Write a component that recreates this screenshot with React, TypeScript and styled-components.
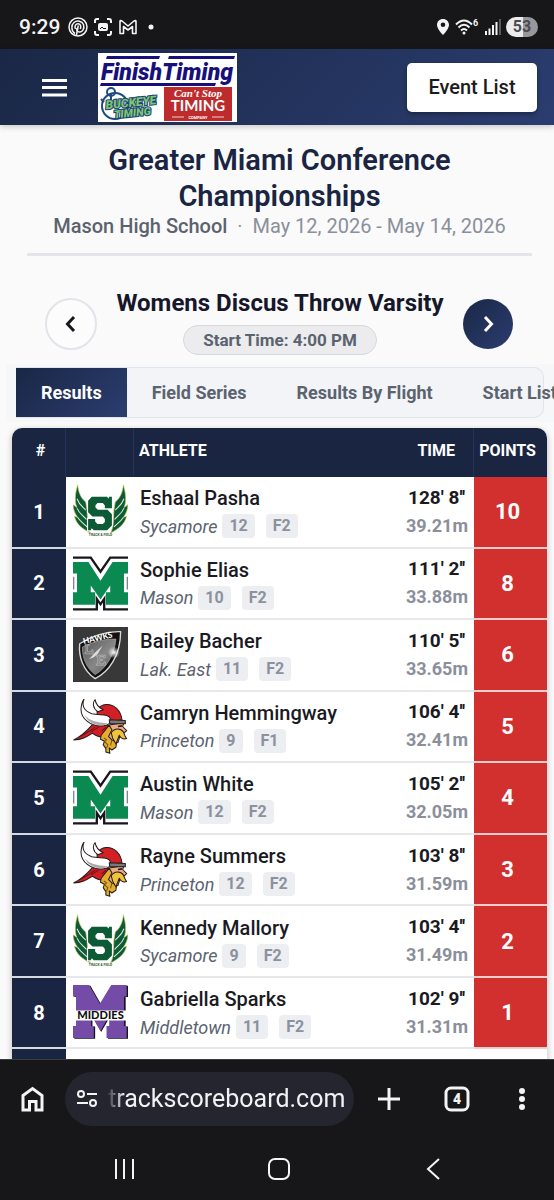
import React from 'react';
import styled, { createGlobalStyle } from 'styled-components';

const GlobalStyle = createGlobalStyle`
  * { box-sizing: border-box; }
  body {
    margin: 0;
    background: #fafafb;
    font-family: Roboto, "Liberation Sans", sans-serif;
    color: #1a1a1f;
  }
  button, input { font-family: inherit; }
`;

const navy = '#1a2542';
const navyGradient = 'linear-gradient(135deg, #1a2745 0%, #2b3d70 100%)';

const Screen = styled.div`
  height: 100vh;
  display: flex;
  flex-direction: column;
  overflow: hidden;
`;

const StatusBar = styled.div`
  flex: none;
  height: 49px;
  padding: 4px 16px 0 19px;
  background: #171719;
  color: #f4f4f5;
  display: flex;
  align-items: center;
  justify-content: space-between;
`;

const StatusGroup = styled.div`
  display: flex;
  align-items: center;
  gap: 5px;
`;

const Clock = styled.span`
  font-size: 21px;
  line-height: 24px;
  font-weight: 500;
  margin-right: 3px;
`;

const Battery = styled.span`
  width: 32px;
  height: 20px;
  border-radius: 10px;
  background: linear-gradient(90deg, #ececee 53%, #98989c 53%);
  color: #4c4c50;
  font-size: 16px;
  line-height: 20px;
  font-weight: 700;
  text-align: center;
`;

const AppHeader = styled.header`
  flex: none;
  height: 76px;
  padding: 0 17px 0 38px;
  display: flex;
  align-items: center;
  background: ${navyGradient};
  box-shadow: 0 2px 6px rgba(0, 0, 0, 0.2);
  position: relative;
`;

const MenuButton = styled.button`
  border: 0;
  padding: 0;
  width: 32px;
  height: 32px;
  background: none;
  color: #fff;
`;

const BrandLink = styled.a`
  display: block;
  height: 69px;
  margin-left: 28px;
`;

const EventListButton = styled.button`
  margin-left: auto;
  width: 130px;
  height: 49px;
  border: 0;
  border-radius: 5px;
  background: #fff;
  color: #1b1b20;
  font-size: 20px;
  font-weight: 500;
  box-shadow: 0 2px 4px rgba(0, 0, 0, 0.35);
`;

const Main = styled.main`
  flex: 1;
  min-height: 0;
  overflow: hidden;
`;

const MeetHeader = styled.section`
  margin: 0 22px 0 27px;
  padding: 17px 56px 15px;
  border-bottom: 3px solid #e3e5ea;
  text-align: center;
`;

const MeetTitle = styled.h1`
  margin: 0;
  font-size: 29px;
  line-height: 36px;
  font-weight: 600;
  color: ${navy};
`;

const MeetInfo = styled.p`
  margin: 0 -56px;
  font-size: 20px;
  line-height: 24px;
  color: #8b8f9a;
  white-space: pre;
`;

const Venue = styled.span`
  font-weight: 500;
  color: #5b626d;
`;

const EventNav = styled.section`
  padding: 30px 41px 0 45px;
  display: flex;
  align-items: center;
  justify-content: space-between;
`;

const RoundButton = styled.button<{ $filled?: boolean }>`
  flex: none;
  width: ${(p) => (p.$filled ? 50 : 52)}px;
  height: ${(p) => (p.$filled ? 50 : 52)}px;
  margin-top: 6px;
  padding: 0;
  border-radius: 50%;
  border: ${(p) => (p.$filled ? '0' : '2px solid #e3e4ea')};
  background: ${(p) => (p.$filled ? navyGradient : '#fcfcfd')};
  color: ${(p) => (p.$filled ? '#fff' : '#17171c')};
  display: flex;
  align-items: center;
  justify-content: center;
`;

const EventInfo = styled.div`
  display: flex;
  flex-direction: column;
  align-items: center;
  gap: 5px;
`;

const EventTitle = styled.h2`
  margin: 0;
  font-size: 24px;
  line-height: 34px;
  font-weight: 700;
  color: #17172a;
  white-space: nowrap;
`;

const StartTime = styled.span`
  padding: 0 19px;
  border: 1px solid #d6d8dc;
  border-radius: 15px;
  background: #ececee;
  color: #5a636f;
  font-size: 17px;
  line-height: 28px;
  font-weight: 700;
`;

const TabStrip = styled.div`
  margin: 9px 0 0 6px;
  padding: 3px 10px 4px;
  background: #f5f7f9;
  overflow: hidden;
`;

const TabList = styled.div`
  height: 51px;
  border: 1px solid #e1e4e8;
  border-left: 0;
  border-radius: 0 10px 10px 0;
  background: #f3f4f7;
  display: flex;
`;

const Tab = styled.button<{ $active?: boolean }>`
  flex: none;
  padding: 0 25px;
  border: 0;
  background: ${(p) => (p.$active ? navyGradient : 'none')};
  color: ${(p) => (p.$active ? '#fff' : '#5a636f')};
  font-size: 18px;
  font-weight: 700;
  white-space: nowrap;
`;

const TableCard = styled.div`
  margin: 6px 7px 0 12px;
  border-radius: 10px;
  overflow: hidden;
  background: #fff;
  box-shadow: 0 2px 6px rgba(0, 0, 0, 0.25);
`;

const Table = styled.table`
  width: 100%;
  height: 693px;
  table-layout: fixed;
  border-collapse: separate;
  border-spacing: 0;
`;

const HeadCell = styled.th<{ $align?: string; $width?: number; $divider?: boolean }>`
  width: ${(p) => (p.$width ? `${p.$width}px` : 'auto')};
  height: 49px;
  padding: ${(p) => (p.$align === 'right' ? '0 18px 4px 0' : p.$align === 'left' ? '0 0 4px 5px' : '0 0 4px 4px')};
  background: ${navy};
  border-right: ${(p) => (p.$divider ? '1px solid #25325a' : '0')};
  color: #fff;
  font-size: 16px;
  line-height: 20px;
  font-weight: 700;
  text-align: ${(p) => p.$align || 'center'};
`;

const PointsHead = styled(HeadCell)`
  padding: 0 6px 4px 0;
`;

const Cell = styled.td`
  padding: 0;
  border-bottom: 2px solid #e6e7ea;
  background: #fff;
  vertical-align: middle;
`;

const RankCell = styled(Cell)`
  background: ${navy};
  border-bottom-color: #d5d9e2;
  color: #fff;
  font-size: 20px;
  font-weight: 700;
  text-align: center;
`;

const LogoCell = styled(Cell)`
  padding: 0 6px 0 7px;
  svg { display: block; }
`;

const AthleteCell = styled(Cell)`
  padding: 7px 0 6px 6px;
`;

const TimeCell = styled(Cell)`
  padding: 0 6px 0 0;
  text-align: right;
`;

const PointsCell = styled(Cell)`
  background: #d22f2f;
  border-bottom-color: #f0cdcd;
  color: #fff;
  font-size: 22px;
  font-weight: 700;
  text-align: center;
  padding-right: 6px;
`;

const AthleteName = styled.div`
  min-height: 28px;
  font-size: 20px;
  line-height: 28px;
  font-weight: 500;
  white-space: nowrap;
`;

const TeamLine = styled.div`
  height: 28px;
  display: flex;
  align-items: center;
  white-space: nowrap;
`;

const TeamName = styled.span`
  margin-right: 5px;
  color: #5a636f;
  font-size: 18px;
  font-style: italic;
  font-weight: 400;
`;

const Badge = styled.span`
  margin-right: 11px;
  padding: 0 7px;
  border-radius: 4px;
  background: #eceef1;
  color: #8b919d;
  font-size: 16px;
  line-height: 24px;
  font-weight: 700;
`;

const Mark = styled.div`
  padding-right: 3px;
  font-size: 19px;
  line-height: 28px;
  font-weight: 700;
`;

const Metric = styled.div`
  font-size: 18px;
  line-height: 28px;
  font-weight: 700;
  color: #8b8f9a;
`;

const BrowserChrome = styled.footer`
  flex: none;
  background: #171719;
  border-top: 1px solid #3a3b3f;
  color: #f4f4f5;
  position: relative;
`;

const Toolbar = styled.div`
  height: 77px;
  padding: 0 27px 0 20px;
  display: flex;
  align-items: center;
`;

const IconButton = styled.button<{ $left?: number }>`
  flex: none;
  margin-left: ${(p) => p.$left || 0}px;
  padding: 0;
  border: 0;
  background: none;
  color: inherit;
  display: flex;
`;

const AddressBar = styled.label`
  flex: 1;
  min-width: 0;
  height: 54px;
  margin-left: 20px;
  padding: 0 8px 0 11px;
  border-radius: 27px;
  background: #24252f;
  display: flex;
  align-items: center;
  gap: 10px;
  svg { flex: none; }
`;

const AddressInput = styled.input`
  flex: 1;
  min-width: 0;
  padding: 0;
  border: 0;
  outline: 0;
  background: none;
  color: #f2f2f4;
  font-size: 25px;
  mask-image: linear-gradient(90deg, rgba(0, 0, 0, 0.1), #000 16px);
`;

const SystemNav = styled.nav`
  height: 63px;
  padding: 0 108px 0 112px;
  display: flex;
  align-items: center;
  justify-content: space-between;
`;

const SycamoreLogo = () => (
  <svg width="55" height="55" viewBox="0 0 164 164" aria-label="Sycamore">
    <g fill="#0c5a36" stroke="#c9cf62" strokeWidth="2">
      <path d="M14 2C16 26 24 42 38 54L42 78 44 118C46 132 48 138 52 146C28 134 10 120 4 96L14 100C6 88 1 78 0 62L12 70C4 54 6 28 14 2Z" />
      <path d="M150 2C148 26 140 42 126 54L122 78 120 118C118 132 116 138 112 146C136 134 154 120 160 96L150 100C158 88 163 78 164 62L152 70C160 54 158 28 150 2Z" />
    </g>
    <g stroke="#e4edda" strokeWidth="3" fill="none">
      <path d="M12 44C18 62 28 68 38 78M12 72C18 88 30 94 40 106M14 100C22 112 32 118 42 128M152 44C146 62 136 68 126 78M152 72C146 88 134 94 124 106M150 100C142 112 132 118 122 128" />
    </g>
    <path
      d="M56 38H101L106 43 108 38H116V72H95V64L89 57H73L67 63V70L74 77H103L116 90V124L102 138H62L56 132 53 138H45V104H66V112L73 119H89L95 113V104L89 97H58L45 84V50Z"
      fill="#0c5a36" stroke="#fff" strokeWidth="7" paintOrder="stroke"
    />
    <text x="82" y="156" textAnchor="middle" fontSize="10" fontWeight="700" fill="#33592c">TRACK &amp; FIELD</text>
  </svg>
);

const MasonLogo = () => (
  <svg width="55" height="55" viewBox="0 0 164 164" aria-label="Mason">
    <path d="M0 5H53L82 47 111 5H164" fill="none" stroke="#17171c" strokeWidth="7" />
    <path d="M0 18H46L82 74 118 18H164V52H152V108H164V145H98V108H111V88L82 130 53 88V108H66V145H0V108H12V52H0Z" fill="#0a8a51" />
    <path d="M0 159H71V128L82 144 93 128V159H164" fill="none" stroke="#17171c" strokeWidth="7" />
    <path d="M2 62V100M162 62V100" stroke="#80868a" strokeWidth="4" />
  </svg>
);

const HawksLogo = () => (
  <svg width="55" height="55" viewBox="0 0 164 164" aria-label="Lakota East">
    <defs>
      <linearGradient id="shield" x1="0" y1="0" x2="1" y2="1">
        <stop offset="0" stopColor="#555" />
        <stop offset="0.55" stopColor="#888" />
        <stop offset="1" stopColor="#555" />
      </linearGradient>
      <radialGradient id="glint">
        <stop offset="0" stopColor="#fff" />
        <stop offset="1" stopColor="#fff" stopOpacity="0" />
      </radialGradient>
    </defs>
    <rect width="164" height="164" fill="#383838" />
    <path d="M20 50C16 88 30 130 66 154C104 136 142 88 142 14Q80 12 20 50Z" fill="#111" stroke="#d9d9d9" strokeWidth="4" />
    <path d="M28 60C28 94 40 122 66 142C98 124 124 84 128 36Q80 34 28 60Z" fill="url(#shield)" stroke="#aaa" strokeWidth="2" />
    <text x="32" y="51" fontFamily="Lato, sans-serif" fontSize="24" fontWeight="900" fill="#fff" transform="rotate(-13 32 51)">HAWKS</text>
    <path d="M36 52H48V56H43V74H56V68H60V80H36V76H39V56H36ZM70 84H96V92H91V88H80V96H88V100H80V110H92V104H97V114H70V110H74V88H70Z" stroke="#bbb" strokeWidth="2" fill="none" />
    <path d="M48 96L66 76 88 56 74 80 62 90Z" fill="#ddd" />
    <circle cx="122" cy="76" r="18" fill="url(#glint)" />
  </svg>
);

const VikingLogo = () => (
  <svg width="55" height="55" viewBox="0 0 164 164" aria-label="Princeton">
    <g stroke="#241a18" strokeWidth="3" strokeLinejoin="round">
      <path d="M62 72C44 92 30 110 2 122C28 122 42 112 58 102Q66 110 86 114L100 100 106 78Z" fill="#cf1f25" />
      <path d="M104 78L152 70 148 82 160 94 152 102 144 98 134 130 114 136 102 106Z" fill="#e9ac88" />
      <path d="M84 108L108 78 116 92 106 112 116 122 130 128 128 144 116 152 108 146 110 162 98 158 98 148 90 136 94 126 82 120Z" fill="#e4ae2c" />
      <path d="M114 100C124 86 142 86 150 98C154 108 156 114 160 118C148 122 140 114 138 108L128 134 118 116Z" fill="#f0c33c" />
      <path d="M72 34C84 12 112 12 130 28Q144 42 146 62L110 68 72 50Z" fill="#d32027" />
      <path d="M74 38C58 26 58 10 66 2C68 18 78 26 90 32Z" fill="#fff" />
      <path d="M33 0C26 18 30 34 56 44C82 50 106 42 112 60C112 74 104 80 90 80C54 84 22 58 24 28Q26 8 33 0Z" fill="#fff" />
      <path d="M108 62L156 64 156 74 110 74Z" fill="#77787c" />
    </g>
    <path d="M34 48Q54 72 104 72L90 79Q50 80 34 48Z" fill="#a9abaf" />
    <path d="M92 116L100 122 94 128 104 136 100 146M116 122L112 138" stroke="#70501a" strokeWidth="3" fill="none" />
    <path d="M22 112Q50 96 66 84M54 98L76 84M86 96L98 84" stroke="#6d1014" strokeWidth="3" fill="none" />
    <path d="M134 82L146 80" stroke="#241a18" strokeWidth="5" />
  </svg>
);

const MiddiesLogo = () => (
  <svg width="55" height="55" viewBox="0 0 164 164" aria-label="Middletown">
    <path d="M4 2H52L84 58 118 2H164V36H157V124H164V160H104V124H112V92L84 140 58 92V124H66V160H4V124H12V36H4Z" fill="#17131c" />
    <path d="M0 0H48L80 56 114 0H160V34H152V122H160V158H100V122H108V90L82 138 54 90V122H62V158H0V122H9V34H0Z" fill="#744ba6" />
    <path d="M0 76H164V106H0Z" fill="#fff" />
    <text x="82" y="102" textAnchor="middle" fontFamily="Lato, sans-serif" fontSize="33" fontWeight="900" fill="#111">MIDDIES</text>
  </svg>
);

const BrandLogo = () => (
  <svg width="139" height="69" viewBox="0 0 139 69" aria-label="FinishTiming">
    <rect width="139" height="69" fill="#fff" />
    <g fill="#17107a">
      <path d="M9 3H62L61 6H8ZM71 3H137L136 6H70Z" />
      <text x="3" y="27" fontFamily="Roboto, sans-serif" fontSize="23" fontWeight="900" fontStyle="italic">FinishTiming</text>
      <path d="M3 30H118L117 33H2Z" />
    </g>
    <g fill="none" stroke="#1d4a85" strokeWidth="2">
      <circle cx="17" cy="53" r="13" />
      <circle cx="13" cy="39" r="4" />
      <path d="M13 40V52M3 46L6 49" />
    </g>
    <g fontFamily="Roboto, sans-serif" fontWeight="900" fontStyle="italic" fill="#7fc56b" stroke="#17407c" strokeWidth="2" paintOrder="stroke" transform="rotate(-6 30 54)">
      <text x="8" y="54" fontSize="12">BUCKEYE</text>
      <text x="15" y="64" fontSize="11">TIMING</text>
    </g>
    <rect x="66" y="34" width="68" height="34" fill="#bd2b2d" />
    <g fill="#fff" textAnchor="middle">
      <text x="100" y="44" fontFamily="'Liberation Serif', serif" fontSize="11" fontWeight="700" fontStyle="italic">Can't Stop</text>
      <text x="100" y="58" fontFamily="Lato, sans-serif" fontSize="15" fontWeight="700">TIMING</text>
      <text x="100" y="66" fontSize="4" fontWeight="700">COMPANY</text>
    </g>
    <path d="M74 64H86M114 64H126" stroke="#f3cfcf" strokeWidth="1" />
  </svg>
);

const Chevron = ({ right }: { right?: boolean }) => (
  <svg width="20" height="20" viewBox="0 0 20 20" fill="none" stroke="currentColor" strokeWidth="3">
    <path d={right ? 'M7 3L13.500 10L7 17' : 'M13 3L6.500 10L13 17'} />
  </svg>
);

const logos = {
  Sycamore: SycamoreLogo,
  Mason: MasonLogo,
  'Lak. East': HawksLogo,
  Princeton: VikingLogo,
  Middletown: MiddiesLogo,
};

type Result = {
  name: string;
  team: keyof typeof logos;
  grade: number;
  flight: string;
  mark: string;
  metric: string;
  points: number;
};

const results: Result[] = [
  { name: 'Eshaal Pasha', team: 'Sycamore', grade: 12, flight: 'F2', mark: "128' 8''", metric: '39.21m', points: 10 },
  { name: 'Sophie Elias', team: 'Mason', grade: 10, flight: 'F2', mark: "111' 2''", metric: '33.88m', points: 8 },
  { name: 'Bailey Bacher', team: 'Lak. East', grade: 11, flight: 'F2', mark: "110' 5''", metric: '33.65m', points: 6 },
  { name: 'Camryn Hemmingway', team: 'Princeton', grade: 9, flight: 'F1', mark: "106' 4''", metric: '32.41m', points: 5 },
  { name: 'Austin White', team: 'Mason', grade: 12, flight: 'F2', mark: "105' 2''", metric: '32.05m', points: 4 },
  { name: 'Rayne Summers', team: 'Princeton', grade: 12, flight: 'F2', mark: "103' 8''", metric: '31.59m', points: 3 },
  { name: 'Kennedy Mallory', team: 'Sycamore', grade: 9, flight: 'F2', mark: "103' 4''", metric: '31.49m', points: 2 },
  { name: 'Gabriella Sparks', team: 'Middletown', grade: 11, flight: 'F2', mark: "102' 9''", metric: '31.31m', points: 1 },
];

const tabs = ['Results', 'Field Series', 'Results By Flight', 'Start List'];

export default function App() {
  return (
    <>
      <GlobalStyle />
      <Screen>
        <StatusBar>
          <StatusGroup>
            <Clock>9:29</Clock>
            <svg width="20" height="20" viewBox="0 0 20 20" fill="none" stroke="currentColor" strokeWidth="1.500">
              <circle cx="10" cy="10" r="9" />
              <path d="M7 16.500C3 14 3 8 6 5.500C9 3 14 4 15.500 7.500C17 12 14 15.500 11 15C9 14.500 8.500 13 9 11" />
              <path d="M7.500 12C6 9 8 6.500 10.300 6.700C13 7 13.300 10 12.200 12M10.300 8.500L8.500 18" />
            </svg>
            <svg width="20" height="20" viewBox="0 0 20 20" fill="none" stroke="currentColor" strokeWidth="2">
              <path d="M2 6V4Q2 2 4 2H6M14 2H16Q18 2 18 4V6M18 14V16Q18 18 16 18H14M6 18H4Q2 18 2 16V14" />
              <rect x="5" y="6" width="10" height="8" rx="2" fill="currentColor" stroke="none" />
              <path d="M7 12L9 10L11 12L12 11L13 12" stroke="#171719" strokeWidth="1" />
            </svg>
            <svg width="20" height="20" viewBox="0 0 20 20" fill="none" stroke="currentColor" strokeWidth="1.600" strokeLinejoin="round">
              <path d="M2 16.500V4.500Q2 3 4 4L10 9L16 4Q18 3 18 4.500V16.500H14.500V9.500L10 13L5.500 9.500V16.500Z" />
            </svg>
            <svg width="16" height="20" viewBox="0 0 16 20"><circle cx="8" cy="10" r="2.500" fill="currentColor" /></svg>
          </StatusGroup>
          <StatusGroup>
            <svg width="14" height="18" viewBox="0 0 14 18">
              <path fillRule="evenodd" fill="currentColor" d="M7 1C3.500 1 1 3.600 1 7C1 11 7 17 7 17S13 11 13 7C13 3.600 10.500 1 7 1ZM7 4.500A2.300 2.300 0 1 1 7 9.100A2.300 2.300 0 0 1 7 4.500Z" />
            </svg>
            <svg width="24" height="18" viewBox="0 0 24 18" fill="none" stroke="currentColor" strokeWidth="2">
              <path d="M1 6.500Q9 -1.500 17 6.500M3.500 9.500Q9 4 14.500 9.500M6 12.500Q9 9.500 12 12.500" />
              <circle cx="9" cy="15" r="1.500" fill="currentColor" stroke="none" />
              <text x="18" y="8" fontSize="9" fontWeight="700" fill="currentColor" stroke="none">6</text>
            </svg>
            <svg width="17" height="18" viewBox="0 0 17 18" stroke="currentColor" strokeWidth="2">
              <path d="M2 13V17M5.500 10.500V17M9 7V17M12.500 4V17" />
              <path d="M16 1V17" stroke="#5a5a5e" />
            </svg>
            <Battery>53</Battery>
          </StatusGroup>
        </StatusBar>

        <AppHeader>
          <MenuButton aria-label="Menu">
            <svg width="32" height="32" viewBox="0 0 32 32" stroke="currentColor" strokeWidth="3">
              <path d="M4 9.500H29M4 16.500H29M4 24H29" />
            </svg>
          </MenuButton>
          <BrandLink href="#home"><BrandLogo /></BrandLink>
          <EventListButton>Event List</EventListButton>
        </AppHeader>

        <Main>
          <MeetHeader>
            <MeetTitle>Greater Miami Conference Championships</MeetTitle>
            <MeetInfo><Venue>Mason High School</Venue>{'  ·  '}May 12, 2026 - May 14, 2026</MeetInfo>
          </MeetHeader>

          <EventNav>
            <RoundButton aria-label="Previous event"><Chevron /></RoundButton>
            <EventInfo>
              <EventTitle>Womens Discus Throw Varsity</EventTitle>
              <StartTime>Start Time: 4:00 PM</StartTime>
            </EventInfo>
            <RoundButton $filled aria-label="Next event"><Chevron right /></RoundButton>
          </EventNav>

          <TabStrip>
            <TabList role="tablist">
              {tabs.map((label, i) => (
                <Tab key={label} role="tab" aria-selected={i === 0} $active={i === 0}>{label}</Tab>
              ))}
            </TabList>
          </TabStrip>

          <TableCard>
            <Table>
              <thead>
                <tr>
                  <HeadCell $width={54} $divider>#</HeadCell>
                  <HeadCell $width={68} $divider aria-label="Team" />
                  <HeadCell $align="left">ATHLETE</HeadCell>
                  <HeadCell $align="right" $width={90} $divider>TIME</HeadCell>
                  <PointsHead $width={73}>POINTS</PointsHead>
                </tr>
              </thead>
              <tbody>
                {results.map((r, i) => {
                  const Logo = logos[r.team];
                  return (
                    <tr key={r.name}>
                      <RankCell>{i + 1}</RankCell>
                      <LogoCell><Logo /></LogoCell>
                      <AthleteCell>
                        <AthleteName>{r.name}</AthleteName>
                        <TeamLine>
                          <TeamName>{r.team}</TeamName>
                          <Badge>{r.grade}</Badge>
                          <Badge>{r.flight}</Badge>
                        </TeamLine>
                      </AthleteCell>
                      <TimeCell>
                        <Mark>{r.mark}</Mark>
                        <Metric>{r.metric}</Metric>
                      </TimeCell>
                      <PointsCell>{r.points}</PointsCell>
                    </tr>
                  );
                })}
                <tr>
                  <RankCell />
                  <Cell />
                  <AthleteCell><AthleteName /><TeamLine /></AthleteCell>
                  <Cell />
                  <Cell />
                </tr>
              </tbody>
            </Table>
          </TableCard>
        </Main>

        <BrowserChrome>
          <Toolbar>
            <IconButton aria-label="Home">
              <svg width="25" height="28" viewBox="0 0 25 28" fill="none" stroke="currentColor" strokeWidth="3">
                <path d="M3 10.500L12.500 3.500L22 10.500V25H16V16.500H9.500V25H3Z" />
              </svg>
            </IconButton>
            <AddressBar>
              <svg width="22" height="20" viewBox="0 0 22 20" fill="none" stroke="currentColor" strokeWidth="2">
                <circle cx="5" cy="5" r="3" /><path d="M11 5H21M1 14H12" /><circle cx="17" cy="14" r="3" />
              </svg>
              <AddressInput type="text" aria-label="Address" defaultValue="trackscoreboard.com" />
            </AddressBar>
            <IconButton $left={24} aria-label="New tab">
              <svg width="22" height="22" viewBox="0 0 22 22" stroke="currentColor" strokeWidth="3"><path d="M11 0V22M0 11H22" /></svg>
            </IconButton>
            <IconButton $left={44} aria-label="Tabs">
              <svg width="26" height="26" viewBox="0 0 26 26">
                <rect x="2" y="2" width="22" height="22" rx="5" fill="none" stroke="currentColor" strokeWidth="3" />
                <text x="13" y="18" textAnchor="middle" fontSize="14" fontWeight="900" fill="currentColor">4</text>
              </svg>
            </IconButton>
            <IconButton $left={47} aria-label="More">
              <svg width="10" height="24" viewBox="0 0 10 24" fill="currentColor">
                <circle cx="5" cy="4" r="3" /><circle cx="5" cy="12" r="3" /><circle cx="5" cy="20" r="3" />
              </svg>
            </IconButton>
          </Toolbar>
          <SystemNav>
            <IconButton aria-label="Recent apps">
              <svg width="24" height="24" viewBox="0 0 24 24" stroke="currentColor" strokeWidth="2"><path d="M4 2V22M12 2V22M21 2V22" /></svg>
            </IconButton>
            <IconButton aria-label="System home">
              <svg width="24" height="24" viewBox="0 0 24 24" fill="none" stroke="currentColor" strokeWidth="2"><rect x="2" y="2" width="20" height="20" rx="6" /></svg>
            </IconButton>
            <IconButton aria-label="Back">
              <svg width="24" height="24" viewBox="0 0 24 24" fill="none" stroke="currentColor" strokeWidth="2"><path d="M17 2L6 12L17 22" /></svg>
            </IconButton>
          </SystemNav>
        </BrowserChrome>
      </Screen>
    </>
  );
}
